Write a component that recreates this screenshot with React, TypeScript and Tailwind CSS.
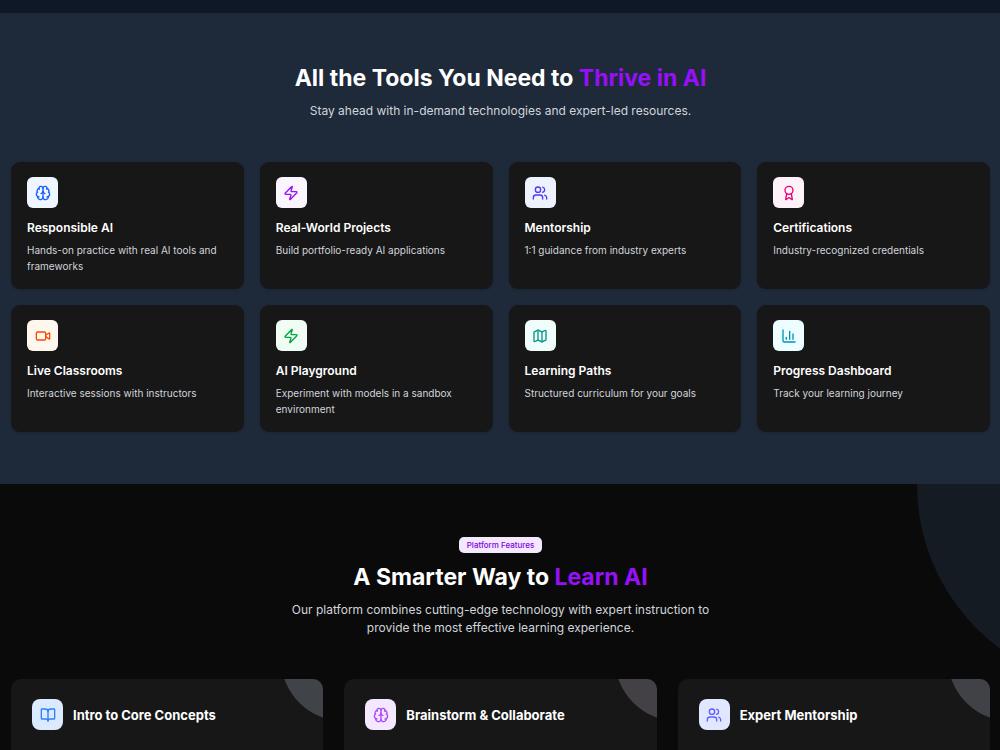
import React from 'react';
import {
  Award,
  BookOpen,
  Brain,
  ChartColumn,
  Map,
  Users,
  Video,
  Zap,
  type LucideIcon,
} from 'lucide-react';

type Tool = {
  title: string;
  description: string;
  icon: LucideIcon;
  tile: string;
};

type Feature = {
  title: string;
  icon: LucideIcon;
  tile: string;
  accent: string;
};

const tools: Tool[] = [
  { title: 'Responsible AI', description: 'Hands-on practice with real AI tools and frameworks', icon: Brain, tile: 'bg-blue-50 text-blue-600' },
  { title: 'Real-World Projects', description: 'Build portfolio-ready AI applications', icon: Zap, tile: 'bg-purple-50 text-purple-600' },
  { title: 'Mentorship', description: '1:1 guidance from industry experts', icon: Users, tile: 'bg-indigo-50 text-indigo-600' },
  { title: 'Certifications', description: 'Industry-recognized credentials', icon: Award, tile: 'bg-pink-50 text-pink-600' },
  { title: 'Live Classrooms', description: 'Interactive sessions with instructors', icon: Video, tile: 'bg-orange-50 text-orange-600' },
  { title: 'AI Playground', description: 'Experiment with models in a sandbox environment', icon: Zap, tile: 'bg-green-50 text-green-600' },
  { title: 'Learning Paths', description: 'Structured curriculum for your goals', icon: Map, tile: 'bg-teal-50 text-teal-600' },
  { title: 'Progress Dashboard', description: 'Track your learning journey', icon: ChartColumn, tile: 'bg-cyan-50 text-cyan-600' },
];

const features: Feature[] = [
  { title: 'Intro to Core Concepts', icon: BookOpen, tile: 'bg-blue-100 text-blue-500', accent: 'bg-[#404347]' },
  { title: 'Brainstorm & Collaborate', icon: Brain, tile: 'bg-purple-100 text-purple-500', accent: 'bg-[#444146]' },
  { title: 'Expert Mentorship', icon: Users, tile: 'bg-indigo-100 text-indigo-500', accent: 'bg-[#414247]' },
];

function ToolCard({ title, description, icon: Icon, tile }: Tool) {
  return (
    <div className="rounded-[9px] bg-neutral-900 px-4 py-[15px] shadow-sm">
      <div className={`mb-[11px] flex size-[31px] items-center justify-center rounded-md ${tile}`}>
        <Icon size={16} />
      </div>
      <h3 className="mb-[5px] text-[12px] leading-[18px] font-semibold text-white">{title}</h3>
      <p className="text-[10px] leading-4 text-gray-300">{description}</p>
    </div>
  );
}

function FeatureCard({ title, icon: Icon, tile, accent }: Feature) {
  return (
    <div className="relative min-h-40 overflow-hidden rounded-[10px] bg-neutral-900 px-[21px] py-5">
      {/* Corner accent */}
      <div className={`absolute -top-[83px] -right-[83px] size-[125px] rounded-full ${accent}`} />
      <div className="flex items-center gap-2.5">
        <div className={`flex size-[31px] items-center justify-center rounded-lg ${tile}`}>
          <Icon size={16} />
        </div>
        <h3 className="text-[13px] leading-[18px] font-bold text-white">{title}</h3>
      </div>
    </div>
  );
}

export default function App() {
  return (
    <main className="flex min-h-screen flex-col bg-gray-900 pt-[13px] font-['Inter',sans-serif]">
      {/* Tools */}
      <section className="bg-gray-800 py-[52px] pr-[10px] pl-[11px]">
        <div className="mb-[42px] text-center">
          <h2 className="mb-[11px] text-[23px] leading-[26px] font-bold text-white">
            All the Tools You Need to <span className="text-purple-600">Thrive in AI</span>
          </h2>
          <p className="text-[12px] leading-[18px] text-gray-300">
            Stay ahead with in-demand technologies and expert-led resources.
          </p>
        </div>
        <div className="grid grid-cols-2 gap-4 sm:grid-cols-4">
          {tools.map((tool) => (
            <ToolCard key={tool.title} {...tool} />
          ))}
        </div>
      </section>

      {/* Platform features */}
      <section className="relative flex flex-1 flex-col overflow-hidden bg-neutral-950 pt-[53px] pr-[10px] pb-[52px] pl-[11px]">
        <div className="absolute -top-[203px] -right-[324px] size-[407px] rounded-full bg-[#141b22]" />
        <div className="relative mb-[42px] flex flex-col items-center text-center">
          <span className="mb-[11px] rounded-[5px] bg-purple-100 px-2 text-[8px] leading-4 font-medium text-purple-700">
            Platform Features
          </span>
          <h2 className="mb-[11px] text-[23px] leading-[26px] font-bold text-white">
            A Smarter Way to <span className="text-purple-600">Learn AI</span>
          </h2>
          <p className="max-w-[438px] text-[12px] leading-[18px] text-gray-300">
            Our platform combines cutting-edge technology with expert instruction to provide the most effective
            learning experience.
          </p>
        </div>
        <div className="relative grid flex-1 gap-[21px] sm:grid-cols-3">
          {features.map((feature) => (
            <FeatureCard key={feature.title} {...feature} />
          ))}
        </div>
      </section>
    </main>
  );
}
